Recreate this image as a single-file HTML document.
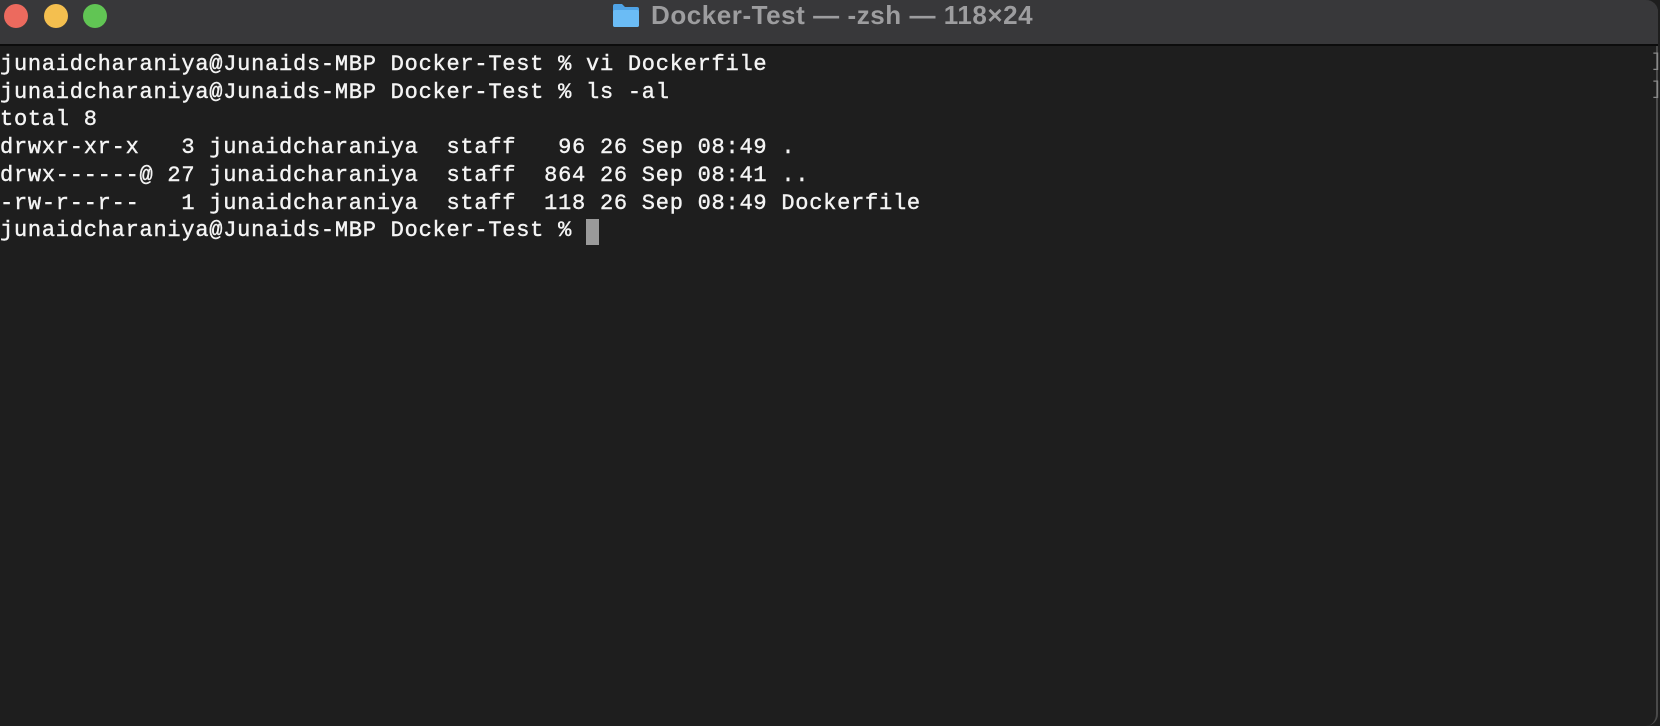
<!DOCTYPE html>
<html><head><meta charset="utf-8"><style>
html,body{margin:0;padding:0;background:#1e1e1e;width:1660px;height:726px;overflow:hidden}
.win{position:absolute;left:0;top:0;width:1658px;height:726px;background:#1e1e1e;border-right:2px solid #4a4a4a;border-radius:0 12px 12px 0;box-sizing:border-box}
.tb{position:absolute;left:0;top:0;width:1658px;height:44px;background:#38383a;border-bottom:2px solid #0c0c0c;border-radius:0 12px 0 0}
.dot{position:absolute;top:4px;width:24px;height:24px;border-radius:50%}
.title{position:absolute;left:651px;top:0;font:bold 26px "Liberation Sans",sans-serif;color:#9d9d9f;line-height:30px;white-space:nowrap;letter-spacing:0.55px}
.term{position:absolute;left:0;top:51px;font-family:"Liberation Mono",monospace;font-size:22px;letter-spacing:0.75px;color:#f4f4f4;white-space:pre;line-height:27.7px;-webkit-text-stroke:0.4px #f4f4f4}
.cur{position:absolute;left:586px;top:219px;width:13px;height:26px;background:#9a9a9a}
.br{position:absolute;left:1651px;font-family:"Liberation Mono",monospace;font-size:18px;color:#888}
</style></head><body>
<div class="win">
<div class="tb">
<div class="dot" style="left:4px;background:#ec6a5e"></div>
<div class="dot" style="left:44px;background:#f4bf4f"></div>
<div class="dot" style="left:83px;background:#61c554"></div>
<svg style="position:absolute;left:612px;top:3px" width="28" height="25" viewBox="0 0 28 25"><path d="M1 3a2 2 0 0 1 2-2h7l3 3h12a2 2 0 0 1 2 2v16a2 2 0 0 1-2 2H3a2 2 0 0 1-2-2z" fill="#4fa3e6"/><rect x="1" y="7" width="26" height="17" rx="2" fill="#6bbcf5"/></svg>
<div class="title">Docker-Test — -zsh — 118×24</div>
</div>
<div class="term">junaidcharaniya@Junaids-MBP Docker-Test % vi Dockerfile
junaidcharaniya@Junaids-MBP Docker-Test % ls -al
total 8
drwxr-xr-x   3 junaidcharaniya  staff   96 26 Sep 08:49 .
drwx------@ 27 junaidcharaniya  staff  864 26 Sep 08:41 ..
-rw-r--r--   1 junaidcharaniya  staff  118 26 Sep 08:49 Dockerfile
junaidcharaniya@Junaids-MBP Docker-Test % </div>
<div class="cur"></div>
<div class="br" style="top:52px">]</div>
<div class="br" style="top:80px">]</div>
</div>
</body></html>
